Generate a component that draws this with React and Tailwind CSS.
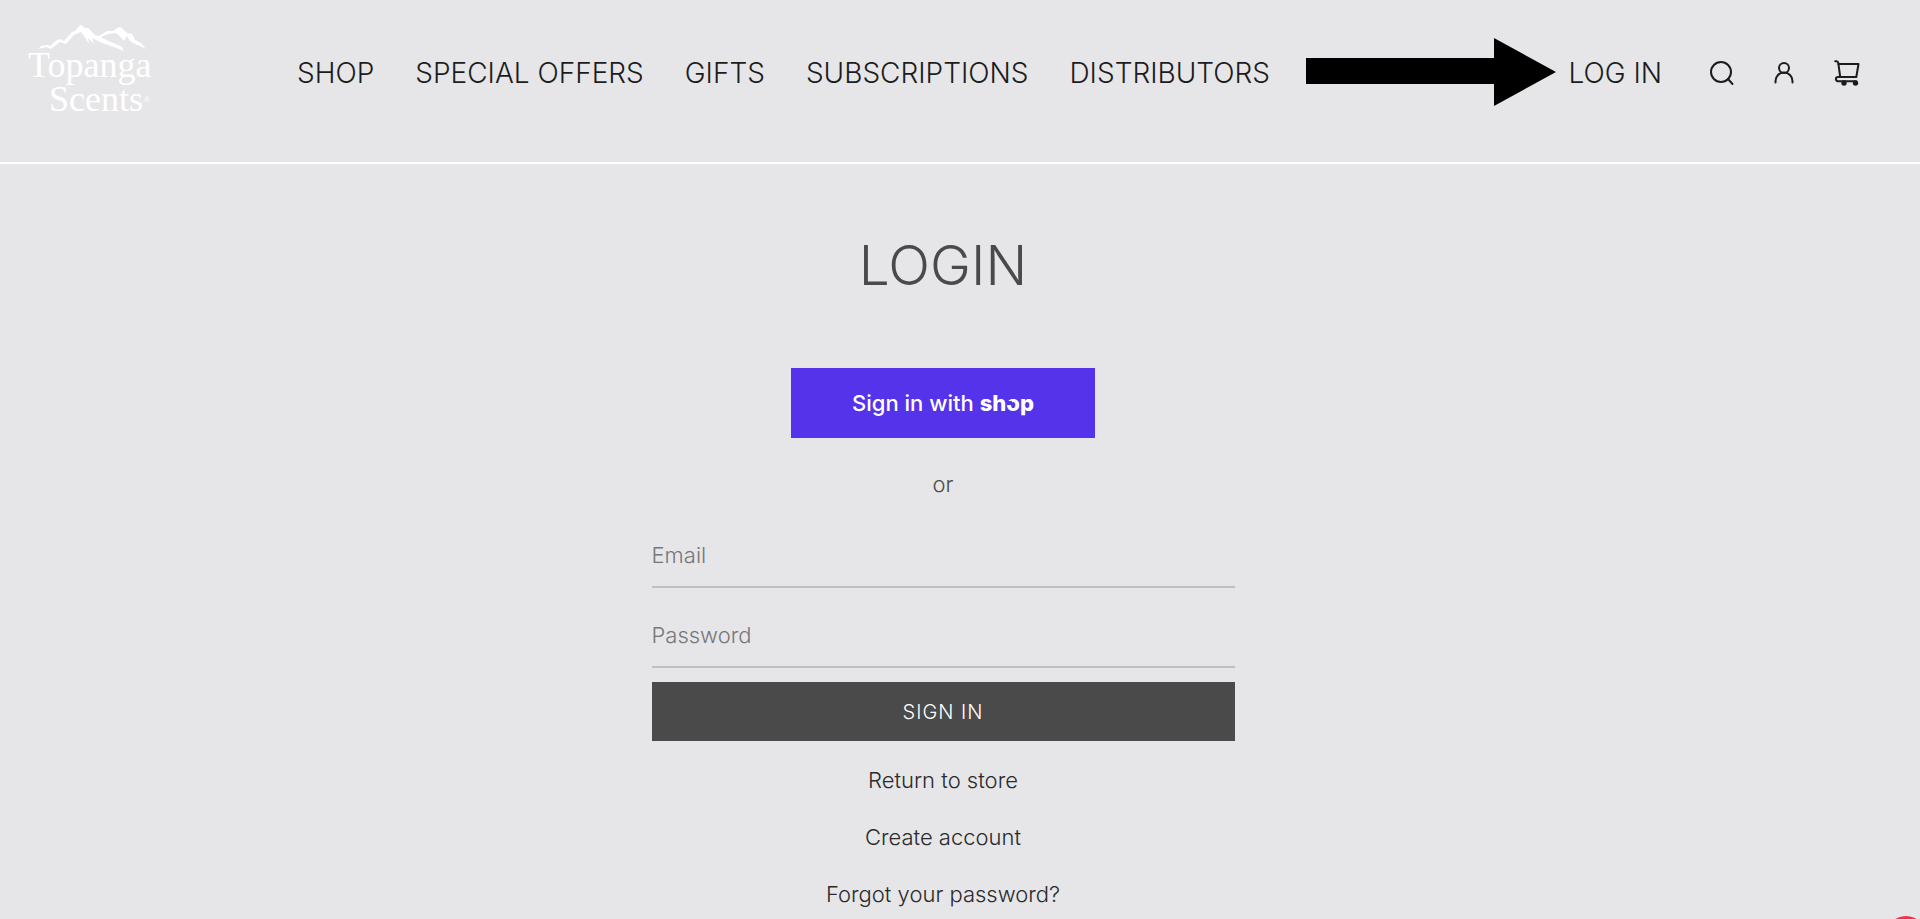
import React from "react";

const navLinks = [
  "SHOP",
  "SPECIAL OFFERS",
  "GIFTS",
  "SUBSCRIPTIONS",
  "DISTRIBUTORS",
];

const accountLinks = ["Return to store", "Create account", "Forgot your password?"];

const Logo = () => {
  return (
    <a
      href="#"
      className="flex flex-col w-[130px] shrink-0 text-white font-['Liberation_Serif',serif] text-4xl leading-[34px]"
    >
      <svg viewBox="0 0 110 26" className="w-[110px] h-[26px] ml-[10px] -mb-[3px]" fill="currentColor">
        <path d="M0 24 L3 21 L9 20 L12 21 L19 15 L22 14 L26 16 L34 7 L37 6 L42 0 L45 1 L47 3 L50 3 L57 10 L61 11 L69 6 L75 6 L81 2 L84 3 L89 8 L94 9 L97 15 L103 18 L108 24 L102 21 L97 19 L92 16 L89 11 L86 16 L81 10 L77 8 L70 9 L63 12 L70 16 L78 19 L84 22 L86 26 L76 22 L67 19 L60 16 L54 13 L56 19 L50 13 L51 19 L46 11 L43 7 L38 9 L35 11 L28 19 L22 17 L13 24 L8 22 Z" />
      </svg>
      <span>Topanga</span>
      <span className="pl-[21px] flex">
        Scents
        <span className="text-[8px] leading-[36px] pl-px">®</span>
      </span>
    </a>
  );
};

const Arrow = () => {
  return (
    <svg viewBox="0 0 250 70" className="w-[250px] h-[70px] shrink-0 ml-auto mr-[12px]">
      <path d="M0 20 H188 V0 L250 34 L188 68 V46 H0 Z" />
    </svg>
  );
};

const SearchIcon = () => (
  <svg viewBox="0 0 26 26" className="size-[26px]" fill="none" stroke="currentColor" strokeWidth="2" strokeLinecap="round">
    <circle cx="13" cy="12" r="10" />
    <path d="M20 19 L24.500 24" />
  </svg>
);

const UserIcon = () => (
  <svg viewBox="0 0 20 24" className="w-5 h-6" fill="none" stroke="currentColor" strokeWidth="2" strokeLinecap="round">
    <circle cx="10" cy="7" r="5" />
    <path d="M1.500 21.500 V20 A8.500 8.500 0 0 1 18.500 20 V21.500" />
  </svg>
);

const CartIcon = () => (
  <svg viewBox="0 0 26 26" className="size-[26px]" fill="none" stroke="currentColor" strokeWidth="2" strokeLinecap="round" strokeLinejoin="round">
    <path d="M1.200 1.200 H2.500 Q4 1.200 4.300 3 L6.200 17" />
    <path d="M4.500 4 H24.500 L22.300 17 H4 A2 2 0 0 0 4 21.200 H22" />
    <circle cx="10" cy="23" r="1.700" fill="currentColor" />
    <circle cx="21.500" cy="23" r="1.700" fill="currentColor" />
  </svg>
);

const Header = () => {
  return (
    <header className="flex items-start border-b-2 border-white pl-7 pr-[60px] h-[164px] text-[#1c1c1e]">
      <div className="pt-[25px]">
        <Logo />
      </div>
      <div className="flex flex-1 items-center pl-[139px] pt-[38px]">
        <nav className="flex gap-[41px] text-[28px] leading-9 whitespace-nowrap">
          {navLinks.map((link) => (
            <a key={link} href="#">
              {link}
            </a>
          ))}
        </nav>
        <Arrow />
        <a href="#" className="text-[28px] leading-9 whitespace-nowrap">
          LOG IN
        </a>
        <div className="flex items-center gap-10 pl-[46px]">
          <button type="button" aria-label="Search">
            <SearchIcon />
          </button>
          <button type="button" aria-label="Account">
            <UserIcon />
          </button>
          <button type="button" aria-label="Cart">
            <CartIcon />
          </button>
        </div>
      </div>
    </header>
  );
};

const Login = () => {
  return (
    <main className="flex flex-col items-center pr-[34px] pt-[69px] text-[22px] leading-7 text-[#4a4a4a]">
      <h1 className="text-[55px] leading-[64px]">LOGIN</h1>
      <button
        type="button"
        className="mt-[71px] flex h-[70px] w-[304px] items-center justify-center gap-[6px] bg-[#5433eb] text-white font-medium"
      >
        Sign in with
        <span className="relative font-extrabold">
          shop
          <span className="absolute left-[27px] top-[12px] h-1 w-[5px] bg-[#5433eb]" />
        </span>
      </button>
      <p className="mt-8">or</p>
      <form className="flex w-full max-w-[583px] flex-col pt-7">
        <input
          type="email"
          aria-label="Email"
          placeholder="Email"
          className="h-[62px] border-b-2 border-[#bfbfc1] pb-[3px] outline-none placeholder:text-[#77777a]"
        />
        <input
          type="password"
          aria-label="Password"
          placeholder="Password"
          className="mt-[18px] h-[62px] border-b-2 border-[#bfbfc1] pb-[3px] outline-none placeholder:text-[#77777a]"
        />
        <button
          type="button"
          className="mt-[14px] h-[59px] bg-[#4a4a4a] text-xl tracking-wider text-white"
        >
          SIGN IN
        </button>
      </form>
      <div className="flex flex-col items-center gap-[29px] pt-[25px] text-[#2a2a2c]">
        {accountLinks.map((link) => (
          <a key={link} href="#">
            {link}
          </a>
        ))}
      </div>
    </main>
  );
};

const App = () => {
  return (
    <div className="min-h-screen bg-[#e6e6e8] font-['Inter','Liberation_Sans',sans-serif] font-light">
      <Header />
      <Login />
      {/* chat launcher, peeking in at the corner */}
      <button
        type="button"
        aria-label="Chat"
        className="fixed -bottom-[37px] -right-[6px] size-10 rounded-full bg-[#f72c50]"
      />
    </div>
  );
};

export default App;
